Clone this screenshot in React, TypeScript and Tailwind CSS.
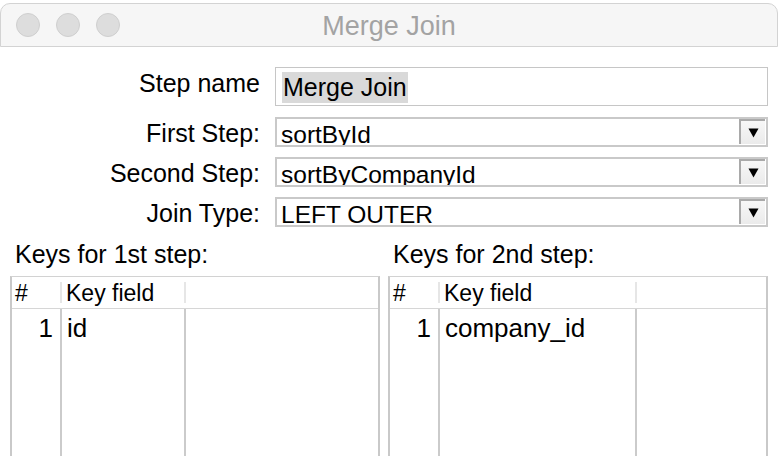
import React from "react"

function Combo({value}:{value:string}){
return(
<div className="flex h-[30px] border-2 border-[#c9c9c9] bg-white">
<div className="flex-1 overflow-hidden pl-[4px] pt-[3px] text-[24.5px] leading-[26px] text-black whitespace-nowrap">
{value}
</div>
<div className="w-[26px] mr-[1px] mb-[1px] border-l-2 border-t-2 border-[#a9a9a9] bg-gradient-to-b from-[#f7f7f7] to-[#ebebeb] flex items-center justify-center">
<svg width="11" height="10" viewBox="0 0 11 10">
<polygon points="0.5,0.5 10.5,0.5 5.5,9.5" fill="#000"/>
</svg>
</div>
</div>
)
}

function KeyTable({label,keyWidth,row,width}:{label:string,keyWidth:string,row:string,width:string}){
return(
<div className={width+" flex flex-col min-w-0"}>
<div className="pl-[5px] text-[25px] leading-[28px] text-black mb-[8px] whitespace-nowrap">{label}</div>
<div className="flex-1 flex flex-col border-t border-[#d2d2d2] border-x-2 border-x-[#c9c9c9]">

{/* header */}
<div className="flex items-center h-[32px] border-b border-[#d6d6d6] text-[23px] text-black">
<div className="w-[48px] pl-[3px] leading-[32px]">#</div>
<div className="w-[2px] h-[21px] bg-[#e6e6e6]"></div>
<div className={keyWidth+" box-content pl-[4px] pr-[1px] leading-[32px] whitespace-nowrap"}>Key field</div>
<div className="w-[2px] h-[21px] bg-[#e6e6e6]"></div>
<div className="flex-1"></div>
</div>

{/* body */}
<div className="flex flex-1 text-[26px] leading-[30px] text-black">
<div className="w-[48px] text-right pr-[7px] pt-[4px]">1</div>
<div className={keyWidth+" border-l-2 border-[#cbcbcb] pl-[5px] pt-[4px] box-content"}>{row}</div>
<div className="flex-1 border-l-2 border-[#cbcbcb]"></div>
</div>

</div>
</div>
)
}

export default function App(){

return(

<div className="w-[778px] h-[456px] bg-white overflow-hidden flex flex-col" style={{fontFamily:'"Liberation Sans", Arial, sans-serif'}}>

{/* TITLE BAR */}

<div className="pt-[3px]">
<div className="h-[44px] rounded-t-[10px] border border-[#d3d3d3] bg-[#f6f6f6] grid grid-cols-[1fr_auto_1fr] items-center">
<div className="flex items-center gap-[16px] pl-[15px]">
<div className="w-[24px] h-[24px] rounded-full bg-[#dddddd] border border-[#cfcfcf]"></div>
<div className="w-[24px] h-[24px] rounded-full bg-[#dddddd] border border-[#cfcfcf]"></div>
<div className="w-[24px] h-[24px] rounded-full bg-[#dddddd] border border-[#cfcfcf]"></div>
</div>
<div className="text-[27px] text-[#a3a3a3] pt-[2px]">Merge Join</div>
<div></div>
</div>
</div>

{/* FORM */}

<div className="grid grid-cols-[260px_1fr] gap-x-[15px] pr-[10px] mt-[20px]">

<div className="text-right text-[25px] leading-[28px] pt-[2px] text-black whitespace-nowrap">Step name</div>
<div className="h-[39px] border border-[#c6c6c6] bg-white flex items-start pt-[4px] pl-[6px]">
<span className="bg-[#d9d9d9] text-[25px] leading-[31px] text-black px-[1px]">Merge Join</span>
</div>

<div className="text-right text-[25px] leading-[28px] pt-[2px] text-black mt-[11px] whitespace-nowrap">First Step:</div>
<div className="mt-[11px]"><Combo value="sortById"/></div>

<div className="text-right text-[25px] leading-[28px] pt-[2px] text-black mt-[10px] whitespace-nowrap">Second Step:</div>
<div className="mt-[10px]"><Combo value="sortByCompanyId"/></div>

<div className="text-right text-[25px] leading-[28px] pt-[2px] text-black mt-[10px] whitespace-nowrap">Join Type:</div>
<div className="mt-[10px]"><Combo value="LEFT OUTER"/></div>

</div>

{/* KEYS */}

<div className="flex-1 flex gap-[8px] px-[10px] mt-[13px]">
<KeyTable label="Keys for 1st step:" keyWidth="w-[117px]" row="id" width="w-[370px]"/>
<KeyTable label="Keys for 2nd step:" keyWidth="w-[190px]" row="company_id" width="flex-1"/>
</div>

</div>

)

}
